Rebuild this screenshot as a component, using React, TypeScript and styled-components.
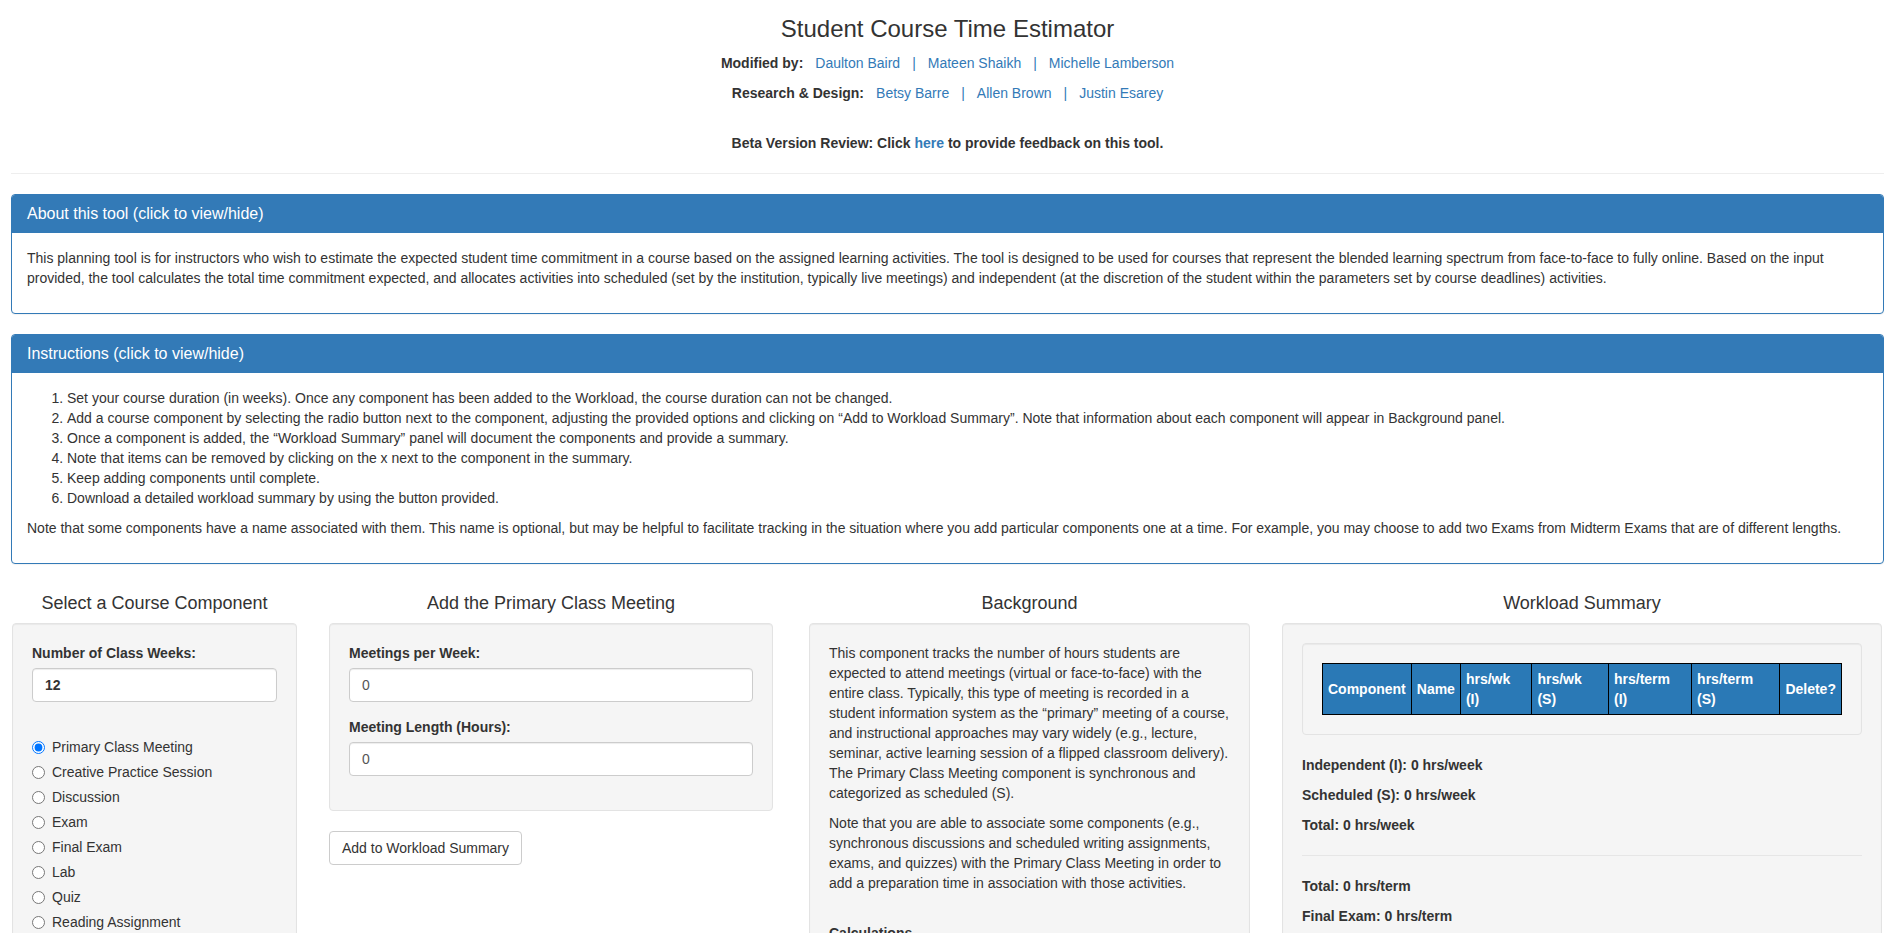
import React from "react";
import styled, { createGlobalStyle } from "styled-components";

const GlobalStyle = createGlobalStyle`
  html, body {
    margin: 0;
    padding: 0;
    background: #fff;
  }
  body {
    font-family: "Liberation Sans", Arial, Helvetica, sans-serif;
    font-size: 14px;
    line-height: 20px;
    color: #333;
  }
  * { box-sizing: border-box; }
  ::-webkit-scrollbar { width: 0; height: 0; display: none; }
`;

const Page = styled.div`
  padding: 0 11px;
`;

const Title = styled.h3`
  margin: 16px 0 11px;
  font-size: 24px;
  font-weight: 400;
  line-height: 1.1;
  text-align: center;
  color: #333;
`;

const CreditLine = styled.div`
  display: flex;
  justify-content: center;
  align-items: center;
  column-gap: 12px;
  line-height: 20px;
  margin-bottom: 10px;
`;

const CreditLabel = styled.span`
  font-weight: 700;
`;

const Link = styled.a`
  color: #337ab7;
  text-decoration: none;
`;

const Sep = styled.span`
  color: #337ab7;
`;

const Notice = styled.div`
  margin-top: 30px;
  text-align: center;
  font-weight: 700;
  line-height: 20px;
`;

const Rule = styled.hr`
  margin: 20px 0;
  border: 0;
  border-top: 1px solid #eee;
`;

const Panel = styled.section`
  border: 1px solid #337ab7;
  border-radius: 4px;
  margin-bottom: 20px;
  background: #fff;
  box-shadow: 0 1px 1px rgba(0, 0, 0, 0.05);
`;

const PanelHeading = styled.div`
  background: #337ab7;
  color: #fff;
  padding: 10px 15px;
  border-radius: 3px 3px 0 0;
  font-size: 16px;
  line-height: 1.1;
`;

const PanelBody = styled.div`
  padding: 15px;
`;

const Para = styled.p`
  margin: 0 0 10px;
`;

const List = styled.ol`
  margin: 0 0 10px;
  padding-left: 40px;
`;

const Columns = styled.div`
  display: grid;
  grid-template-columns: 285px 444px 445px 600px;
  column-gap: 32px;
  padding-left: 1px;
  align-items: start;
`;

const Column = styled.div<{ $shift?: number }>`
  display: flex;
  flex-direction: column;
  align-items: stretch;
  margin-left: ${(p) => p.$shift ?? 0}px;
`;

const ColumnTitle = styled.h4`
  margin: 10px 0;
  font-size: 18px;
  font-weight: 400;
  line-height: 1.1;
  text-align: center;
  color: #333;
`;

const Well = styled.div`
  background: #f5f5f5;
  border: 1px solid #e3e3e3;
  border-radius: 4px;
  padding: 19px;
  margin-bottom: 20px;
  box-shadow: inset 0 1px 1px rgba(0, 0, 0, 0.05);
  min-height: 20px;
`;

const FormGroup = styled.div`
  margin-bottom: 15px;
`;

const Label = styled.label`
  display: block;
  font-weight: 700;
  margin-bottom: 5px;
`;

const TextInput = styled.input<{ $strong?: boolean }>`
  display: block;
  width: 100%;
  height: 34px;
  padding: 6px 12px;
  font-family: inherit;
  font-size: 14px;
  line-height: 20px;
  color: ${(p) => (p.$strong ? "#333" : "#555")};
  font-weight: ${(p) => (p.$strong ? 700 : 400)};
  background: #fff;
  border: 1px solid #ccc;
  border-radius: 4px;
  box-shadow: inset 0 1px 1px rgba(0, 0, 0, 0.075);
  outline: none;
`;

const RadioGroup = styled.div`
  display: flex;
  flex-direction: column;
  row-gap: 5px;
  margin-top: 35px;
`;

const RadioLabel = styled.label`
  display: flex;
  align-items: center;
  min-height: 20px;
  line-height: 20px;
  cursor: pointer;
`;

const Radio = styled.input`
  width: 13px;
  height: 13px;
  margin: 0 7px 0 0;
  flex: none;
`;

const ButtonRow = styled.div`
  display: flex;
`;

const Button = styled.button`
  font-family: inherit;
  font-size: 14px;
  line-height: 20px;
  padding: 6px 12px;
  color: #333;
  background: #fff;
  border: 1px solid #ccc;
  border-radius: 4px;
  cursor: pointer;
`;

const BgText = styled.p`
  margin: 0 0 10px;
`;

const SubHead = styled.div`
  margin-top: 30px;
  font-weight: 700;
`;

const Table = styled.table`
  width: 100%;
  border-collapse: collapse;
`;

const Th = styled.th`
  background: #2a79b6;
  color: #fff;
  font-weight: 700;
  text-align: left;
  vertical-align: middle;
  padding: 5px;
  border: 1px solid #000;
  line-height: 20px;
`;

const SummaryLine = styled.p`
  margin: 0 0 10px;
  font-weight: 700;
`;

const SummaryRule = styled.hr`
  margin: 20px 0;
  border: 0;
  border-top: 1px solid #e6e6e6;
`;

const components = [
  "Primary Class Meeting",
  "Creative Practice Session",
  "Discussion",
  "Exam",
  "Final Exam",
  "Lab",
  "Quiz",
  "Reading Assignment",
  "Writing Assignment",
  "Other",
];

const instructions = [
  "Set your course duration (in weeks). Once any component has been added to the Workload, the course duration can not be changed.",
  "Add a course component by selecting the radio button next to the component, adjusting the provided options and clicking on \u201CAdd to Workload Summary\u201D. Note that information about each component will appear in Background panel.",
  "Once a component is added, the \u201CWorkload Summary\u201D panel will document the components and provide a summary.",
  "Note that items can be removed by clicking on the x next to the component in the summary.",
  "Keep adding components until complete.",
  "Download a detailed workload summary by using the button provided.",
];

const headers = ["Component", "Name", "hrs/wk (I)", "hrs/wk (S)", "hrs/term (I)", "hrs/term (S)", "Delete?"];

export default function App() {
  return (
    <>
      <GlobalStyle />
      <Page>
        <Title>Student Course Time Estimator</Title>
        <CreditLine>
          <CreditLabel>Modified by:</CreditLabel>
          <Link href="#">Daulton Baird</Link>
          <Sep>|</Sep>
          <Link href="#">Mateen Shaikh</Link>
          <Sep>|</Sep>
          <Link href="#">Michelle Lamberson</Link>
        </CreditLine>
        <CreditLine>
          <CreditLabel>Research &amp; Design:</CreditLabel>
          <Link href="#">Betsy Barre</Link>
          <Sep>|</Sep>
          <Link href="#">Allen Brown</Link>
          <Sep>|</Sep>
          <Link href="#">Justin Esarey</Link>
        </CreditLine>
        <Notice>
          Beta Version Review: Click <Link href="#">here</Link> to provide feedback on this tool.
        </Notice>
        <Rule />

        <Panel>
          <PanelHeading>About this tool (click to view/hide)</PanelHeading>
          <PanelBody>
            <Para>
              This planning tool is for instructors who wish to estimate the expected student time commitment in a
              course based on the assigned learning activities. The tool is designed to be used for courses that
              represent the blended learning spectrum from face-to-face to fully online. Based on the input provided,
              the tool calculates the total time commitment expected, and allocates activities into scheduled (set by
              the institution, typically live meetings) and independent (at the discretion of the student within the
              parameters set by course deadlines) activities.
            </Para>
          </PanelBody>
        </Panel>

        <Panel>
          <PanelHeading>Instructions (click to view/hide)</PanelHeading>
          <PanelBody>
            <List>
              {instructions.map((t) => (
                <li key={t}>{t}</li>
              ))}
            </List>
            <Para>
              Note that some components have a name associated with them. This name is optional, but may be helpful to
              facilitate tracking in the situation where you add particular components one at a time. For example, you
              may choose to add two Exams from Midterm Exams that are of different lengths.
            </Para>
          </PanelBody>
        </Panel>

        <Columns>
          <Column>
            <ColumnTitle>Select a Course Component</ColumnTitle>
            <Well>
              <FormGroup>
                <Label>Number of Class Weeks:</Label>
                <TextInput $strong defaultValue="12" />
              </FormGroup>
              <RadioGroup>
                {components.map((c, i) => (
                  <RadioLabel key={c}>
                    <Radio type="radio" name="component" defaultChecked={i === 0} />
                    {c}
                  </RadioLabel>
                ))}
              </RadioGroup>
            </Well>
          </Column>

          <Column>
            <ColumnTitle>Add the Primary Class Meeting</ColumnTitle>
            <Well>
              <FormGroup>
                <Label>Meetings per Week:</Label>
                <TextInput defaultValue="0" />
              </FormGroup>
              <FormGroup>
                <Label>Meeting Length (Hours):</Label>
                <TextInput defaultValue="0" />
              </FormGroup>
            </Well>
            <ButtonRow>
              <Button type="button">Add to Workload Summary</Button>
            </ButtonRow>
          </Column>

          <Column $shift={4}>
            <ColumnTitle>Background</ColumnTitle>
            <Well>
              <BgText>
                This component tracks the number of hours students are expected to attend meetings (virtual or
                face-to-face) with the entire class. Typically, this type of meeting is recorded in a student
                information system as the {"\u201C"}primary{"\u201D"} meeting of a course, and instructional approaches
                may vary widely (e.g., lecture, seminar, active learning session of a flipped classroom delivery). The
                Primary Class Meeting component is synchronous and categorized as scheduled (S).
              </BgText>
              <BgText>
                Note that you are able to associate some components (e.g., synchronous discussions and scheduled writing
                assignments, exams, and quizzes) with the Primary Class Meeting in order to add a preparation time in
                association with those activities.
              </BgText>
              <SubHead>Calculations</SubHead>
              <BgText>Scheduled (S) hours per week = Meetings per Week × Meeting Length (Hours)</BgText>
            </Well>
          </Column>

          <Column>
            <ColumnTitle>Workload Summary</ColumnTitle>
            <Well>
              <Well>
                <Table>
                  <thead>
                    <tr>
                      {headers.map((h) => (
                        <Th key={h}>{h}</Th>
                      ))}
                    </tr>
                  </thead>
                </Table>
              </Well>
              <SummaryLine>Independent (I): 0 hrs/week</SummaryLine>
              <SummaryLine>Scheduled (S): 0 hrs/week</SummaryLine>
              <SummaryLine>Total: 0 hrs/week</SummaryLine>
              <SummaryRule />
              <SummaryLine>Total: 0 hrs/term</SummaryLine>
              <SummaryLine>Final Exam: 0 hrs/term</SummaryLine>
            </Well>
          </Column>
        </Columns>
      </Page>
    </>
  );
}
